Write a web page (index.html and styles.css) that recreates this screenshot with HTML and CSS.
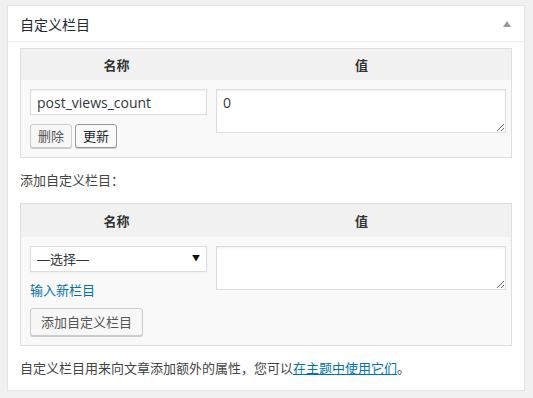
FILE: index.html
```html
<!DOCTYPE html>
<html lang="zh-CN">
<head>
<meta charset="utf-8">
<title>自定义栏目</title>
<link rel="stylesheet" href="styles.css">
</head>
<body>
<div class="postbox">
  <div class="hndle">
    <h2 class="title">自定义栏目</h2>
    <span class="toggle-arrow"></span>
  </div>
  <div class="inside">
    <table class="list-table">
      <thead>
        <tr>
          <th class="col-name">名称</th>
          <th class="col-value">值</th>
        </tr>
      </thead>
      <tbody>
        <tr>
          <td class="col-name">
            <input class="text-input" type="text" value="post_views_count">
            <div class="btn-row">
              <button class="btn btn-small">删除</button>
              <button class="btn btn-small btn-focus">更新</button>
            </div>
          </td>
          <td class="col-value">
            <textarea class="value-area">0</textarea>
          </td>
        </tr>
      </tbody>
    </table>

    <p class="add-label">添加自定义栏目：</p>

    <table class="list-table">
      <thead>
        <tr class="tall">
          <th class="col-name">名称</th>
          <th class="col-value">值</th>
        </tr>
      </thead>
      <tbody>
        <tr>
          <td class="col-name">
            <div class="select-wrap">
              <select class="select-input">
                <option>—选择—</option>
              </select>
              <span class="select-arrow">▼</span>
            </div>
            <a class="new-link" href="#">输入新栏目</a>
            <button class="btn btn-large">添加自定义栏目</button>
          </td>
          <td class="col-value">
            <textarea class="value-area"></textarea>
          </td>
        </tr>
      </tbody>
    </table>

    <p class="footnote">自定义栏目用来向文章添加额外的属性，您可以<a class="doc-link" href="#">在主题中使用它们</a>。</p>
  </div>
</div>
</body>
</html>
```

FILE: styles.css
```css
* {
  box-sizing: border-box;
}

html, body {
  margin: 0;
  padding: 0;
}

body {
  background: #f1f1f1;
  padding: 5px 8px 0 7px;
  font-family: "Noto Sans CJK SC", "Open Sans", sans-serif;
  font-size: 13px;
  color: #444;
}

.postbox {
  background: #fff;
  border: 1px solid #e5e5e5;
  box-shadow: 0 1px 1px rgba(0, 0, 0, 0.04);
}

.hndle {
  height: 36px;
  border-bottom: 1px solid #eee;
  display: flex;
  align-items: center;
  justify-content: space-between;
  padding: 0 13px 0 12px;
}

.title {
  margin: 0;
  font-size: 14px;
  font-weight: 400;
  line-height: 20px;
  color: #23282d;
}

.toggle-arrow {
  width: 0;
  height: 0;
  border-left: 4px solid transparent;
  border-right: 4px solid transparent;
  border-bottom: 6px solid #999;
  margin-top: 1px;
}

.inside {
  padding: 6px 12px 0 12px;
}

.list-table {
  width: 100%;
  border: 1px solid #dfdfdf;
  border-spacing: 0;
  background: #f9f9f9;
}

.list-table thead th {
  background: #f1f1f1;
  height: 31px;
  padding: 0;
  font-weight: 700;
  font-size: 13px;
  color: #333;
  text-align: center;
}

.list-table thead .tall th {
  height: 33px;
}

.list-table th.col-name,
.list-table td.col-name {
  width: 191px;
}

.list-table td {
  vertical-align: top;
  padding: 9px;
}

.list-table td.col-name {
  padding: 9px 4px 9px 9px;
}

.list-table td.col-value {
  padding: 9px 5px 9px 4px;
}

.text-input {
  display: block;
  width: 177px;
  height: 26px;
  margin: 0;
  padding: 0 6px;
  border: 1px solid #ddd;
  background: #fff;
  box-shadow: inset 0 1px 2px rgba(0, 0, 0, 0.07);
  font-family: "Open Sans", sans-serif;
  font-size: 14px;
  color: #32373c;
}

.btn-row {
  display: flex;
  gap: 3px;
  margin-top: 9px;
}

.btn {
  margin: 0;
  border: 1px solid #ccc;
  border-radius: 3px;
  background: #f7f7f7;
  box-shadow: 0 1px 0 #ccc;
  color: #555;
  font-family: "Noto Sans CJK SC", sans-serif;
  font-size: 13px;
  cursor: pointer;
}

.btn-small {
  height: 24px;
  padding: 0 7px;
  line-height: 20px;
}

.btn-focus {
  border-color: #999;
  color: #23282d;
  background: #fafafa;
}

.btn-large {
  display: block;
  height: 28px;
  padding: 0 10px;
  line-height: 24px;
}

.value-area {
  display: block;
  width: 100%;
  height: 44px;
  margin: 0;
  padding: 4px 6px;
  border: 1px solid #ddd;
  background: #fff;
  box-shadow: inset 0 1px 2px rgba(0, 0, 0, 0.07);
  font-family: "Open Sans", sans-serif;
  font-size: 14px;
  line-height: 18px;
  color: #32373c;
  resize: vertical;
}

.select-wrap {
  position: relative;
  width: 177px;
}

.select-input {
  display: block;
  width: 100%;
  height: 26px;
  margin: 0;
  padding: 0 6px;
  border: 1px solid #ddd;
  border-radius: 0;
  background: #fff;
  -webkit-appearance: none;
  appearance: none;
  box-shadow: 0 1px 2px rgba(0, 0, 0, 0.05);
  font-family: "Liberation Sans", "Noto Sans CJK SC", sans-serif;
  font-size: 13px;
  color: #32373c;
}

.select-arrow {
  position: absolute;
  right: 7px;
  top: 7px;
  font-size: 8px;
  line-height: 10px;
  color: #111;
  pointer-events: none;
}

.new-link {
  display: block;
  margin: 8px 0;
  line-height: 20px;
  color: #0073aa;
  text-decoration: none;
}

.add-label {
  margin: 12px 0 13px;
  line-height: 20px;
}

.footnote {
  margin: 12px 0 12px;
  line-height: 20px;
}

.doc-link {
  color: #0073aa;
  text-decoration: underline;
}
```
